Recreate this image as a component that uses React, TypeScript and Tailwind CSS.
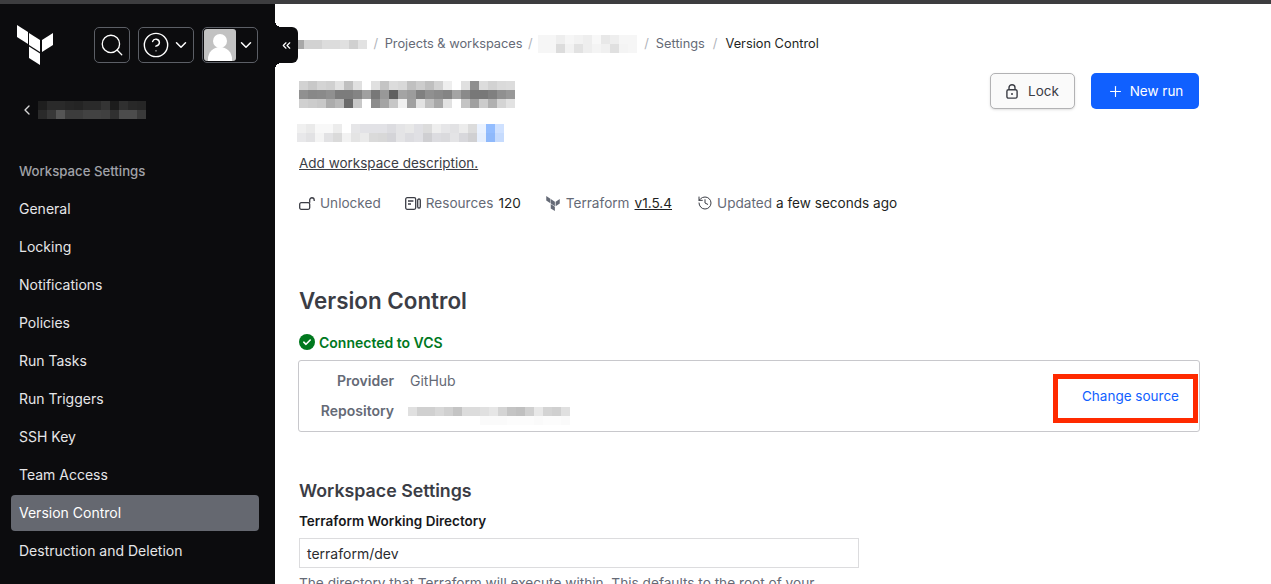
import React from "react";
import { ChevronDown, ChevronLeft, ChevronsLeft, Search, CircleHelp, Plus, History } from "lucide-react";

function Pixels({ rows, size = 9 }: { rows: string[][]; size?: number }) {
  return (
    <div className="flex flex-col">
      {rows.map((r, i) => (
        <div key={i} className="flex">
          {r.map((c, j) => (
            <div key={j} style={{ width: size, height: size, background: c }} />
          ))}
        </div>
      ))}
    </div>
  );
}

const g = (s: string) => s.split(" ").map((v) => (v.length <= 2 ? `#${v}${v}${v}` : `#${v}`));

const titleRows = [
  g("d2 c8 d4 d0 e2 c0 e0 ff e0 c4 dc d8 c0 cc bf d2 ee ff e0 8e dc d2 da dc"),
  g("90 88 8a 90 7c 7c 84 a0 78 98 60 a4 9c 80 90 8a 84 a4 8a 78 78 80 90 98"),
  g("d0 cc c8 ac b8 6a c8 ff 8c a4 c6 f0 a0 e2 c0 a8 e2 ff c4 a0 cc b0 d4 e2"),
];
const subRows = [
  ["#f0f0f0","#eaeaea","#f8f8f8","#f8f8f8","#ececec","#ffffff","#e6e6e8","#e2e2e6","#e2e2e6","#e2e2e6","#dcdce0","#e4e4e6","#e8e8e8","#e0e0e4","#dcdcdc","#eeeeee","#e6e6e8","#e2e2e4","#ececec","#dcdcdc","#eaf2ff","#93bdff","#cfe1ff"],
  ["#e8e8ea","#e2e2e4","#f4f4f4","#e2e2e4","#dadada","#f2f2f2","#e4e4e4","#eaeaea","#dadada","#d8d8d8","#d4d4d8","#e4e4e6","#dcdce0","#e0e0e4","#cfcfd2","#dcdce0","#dadadd","#e4e4e6","#d8d8dc","#d0d0d2","#e6effd","#8fb9fb","#c6dbfd"],
];
const sideRows = [
  g("1e 2a 2a 26 24 2a 2a 34 1c 30 28 26"),
  g("2a 38 55 3c 3c 42 42 40 30 4c 4c 3a"),
];
const crumb1 = [g("a8 d2 d2 dc dc e0 d0 e2")];
const crumb2 = [
  g("f6 f6 ee f6 f2 ee f8 e8 ee f6 f6"),
  g("f6 f6 dc f2 e2 ee f4 f0 e0 f4 f6"),
];
const repoRows = [
  g("e0 d0 d0 d8 d0 c4 dc dc e0 e6 d4 c4 c0 d0 e8 d4 d0 e0"),
  g("ff ff ff ff ff ff ff ff fa fa fa fc fc fc fa fc fc fa"),
];

const menu = ["General", "Locking", "Notifications", "Policies", "Run Tasks", "Run Triggers", "SSH Key", "Team Access", "Version Control", "Destruction and Deletion"];

function Logo({ className, fill }: { className: string; fill: string }) {
  return (
    <svg viewBox="0 0 36 40" className={className} fill={fill}>
      <path d="M0 0 L11 7 V19 L0 12 Z" />
      <path d="M12 8 L23 15 V27 L12 20 Z" />
      <path d="M25 15 L36 8 V20 L25 27 Z" />
      <path d="M12 21.5 L23 28.5 V40 L12 33 Z" />
    </svg>
  );
}

export default function App() {
  return (
    <div className="relative flex h-[584px] w-[1271px] flex-col overflow-hidden bg-white font-['Inter',sans-serif]">
      <div className="h-[4px] shrink-0 bg-[#3d3d3f]" />
      <div className="flex min-h-0 flex-1">
        <aside className="flex w-[275px] shrink-0 flex-col bg-[#0c0c0e] pl-[11px] pr-[16px] text-[14px] leading-[20px] text-[#e6e6e8]">
          <div className="mt-[21px] flex h-[40px] items-center">
            <Logo className="ml-[6px] h-[40px] w-[36px]" fill="#ffffff" />
            <div className="ml-[41px] flex h-[36px] w-[36px] items-center justify-center rounded-[5px] border border-[#5c5f66]">
              <Search className="h-[26px] w-[26px] text-white" strokeWidth={1.2} />
            </div>
            <div className="ml-[8px] flex h-[36px] w-[56px] items-center gap-[2px] rounded-[5px] border border-[#5c5f66] pl-[3px]">
              <CircleHelp className="h-[28px] w-[28px] text-white" strokeWidth={1.2} />
              <ChevronDown className="h-[18px] w-[18px] text-white" strokeWidth={2} />
            </div>
            <div className="ml-[8px] flex h-[36px] w-[56px] items-center rounded-[5px] border border-[#5c5f66] pl-[1px]">
              <div className="relative h-[32px] w-[32px] overflow-hidden rounded-[3px] bg-[#c2c2c2]">
                <div className="absolute left-[9px] top-[5px] h-[14px] w-[14px] rounded-full bg-white" />
                <div className="absolute left-[4px] top-[18px] h-[20px] w-[24px] rounded-t-[12px] bg-white" />
              </div>
              <ChevronDown className="ml-[1px] h-[18px] w-[18px] text-white" strokeWidth={2} />
            </div>
          </div>
          <div className="mt-[36px] flex h-[18px] items-center pl-[8px]">
            <ChevronLeft className="h-[16px] w-[16px] text-[#d8d8d8]" strokeWidth={2} />
            <div className="ml-[3px]"><Pixels rows={sideRows} /></div>
          </div>
          <div className="mt-[42px] pl-[8px] text-[13.2px] font-medium leading-[20px] text-[#a0a2a8]">Workspace Settings</div>
          <nav className="mt-[10px] flex flex-col gap-[2px]">
            {menu.map((m) => (
              <div key={m} className={`flex h-[36px] items-center rounded-[4px] pl-[8px] ${m === "Version Control" ? "bg-[#656870] text-white" : ""}`}>
                {m}
              </div>
            ))}
          </nav>
        </aside>

        <main className="min-w-0 flex-1 pl-[24px] pr-[72px]">
          <div className="ml-[-4px] mt-[30px] flex h-[20px] items-center text-[12.8px] text-[#656a76]">
            <Pixels rows={crumb1} />
            <span className="mx-[6.5px] text-[#b0b3ba]">/</span>
            <span>Projects &amp; workspaces</span>
            <span className="mx-[5.5px] text-[#b0b3ba]">/</span>
            <Pixels rows={crumb2} />
            <span className="mx-[7px] text-[#b0b3ba]">/</span>
            <span>Settings</span>
            <span className="mx-[8px] text-[#b0b3ba]">/</span>
            <span className="text-[#1e1f22]">Version Control</span>
          </div>

          <div className="mt-[19px] flex items-start justify-between">
            <div className="mt-[8px]"><Pixels rows={titleRows} /></div>
            <div className="flex gap-[16px]">
              <button className="flex h-[36px] w-[85px] items-center justify-center gap-[10px] rounded-[5px] border border-[#b2b2b4] bg-[#fafafa] text-[13.5px] text-[#3b3d45] shadow-sm">
                <svg viewBox="0 0 12 15" className="h-[15px] w-[12px]" fill="none" stroke="#3b3d45" strokeWidth="1.4">
                  <rect x="0.9" y="5.7" width="10.2" height="8.4" rx="1.6" />
                  <path d="M3 5.7V3.7a3 3 0 0 1 6 0v2" />
                  <circle cx="6" cy="9.9" r="1" fill="#3b3d45" stroke="none" />
                </svg>
                Lock
              </button>
              <button className="flex h-[36px] w-[108px] items-center justify-center gap-[6px] rounded-[5px] bg-[#1060ff] text-[13.5px] text-white">
                <Plus className="h-[17px] w-[17px]" strokeWidth={1.6} />
                New run
              </button>
            </div>
          </div>

          <div className="ml-[-2px] mt-[15px]"><Pixels rows={subRows} /></div>
          <div className="mt-[11px] text-[13.5px] leading-[20px] text-[#3b3d45] underline">Add workspace description.</div>

          <div className="mt-[20px] flex h-[20px] items-center text-[13.6px] text-[#656a76]">
            <svg viewBox="0 0 16 13" className="h-[13px] w-[16px]" fill="none" stroke="#3b3d45" strokeWidth="1.3">
              <rect x="0.7" y="5.7" width="10" height="6.6" rx="1.5" />
              <path d="M10.7 5.7V3a2.25 2.25 0 0 1 4.5 0v1" />
            </svg>
            <span className="ml-[5px]">Unlocked</span>
            <svg viewBox="0 0 16 13" className="ml-[24px] h-[13px] w-[16px]" fill="none" stroke="#3b3d45" strokeWidth="1.3">
              <rect x="0.7" y="0.7" width="10" height="11.6" rx="1.5" />
              <path d="M3 4h5.4M3 7h3" />
              <rect x="12.7" y="2" width="2.6" height="9" rx="1.2" />
            </svg>
            <span className="ml-[5px]">Resources</span>
            <span className="ml-[5px] text-[#1e1f22]">120</span>
            <Logo className="ml-[25px] h-[15px] w-[14px]" fill="#656a76" />
            <span className="ml-[6px]">Terraform</span>
            <span className="ml-[5px] text-[#1e1f22] underline">v1.5.4</span>
            <History className="ml-[25px] h-[16px] w-[16px] text-[#3b3d45]" strokeWidth={1.5} />
            <span className="ml-[4px]">Updated</span>
            <span className="ml-[4px] text-[#1e1f22]">a few seconds ago</span>
          </div>

          <h1 className="mt-[73px] text-[22.4px] font-semibold leading-[30px] text-[#3b3d45]">Version Control</h1>

          <div className="mt-[16px] flex h-[20px] items-center gap-[4px] text-[14px] font-semibold text-[#00781e]">
            <svg viewBox="0 0 16 16" className="h-[16px] w-[16px]">
              <circle cx="8" cy="8" r="8" fill="#00781e" />
              <path d="M4.8 8.2 7 10.3 11.2 6" fill="none" stroke="#fff" strokeWidth="1.6" strokeLinecap="round" strokeLinejoin="round" />
            </svg>
            Connected to VCS
          </div>

          <div className="relative ml-[-1px] mt-[8px] flex h-[72px] w-[902px] items-center justify-between rounded-[3px] border border-[#c8c8cc] text-[14px] leading-[20px]">
            <div className="grid grid-cols-[95px_auto] items-center gap-x-[16px] gap-y-[10px]">
              <span className="text-right font-semibold text-[#656a76]">Provider</span>
              <span className="text-[#656a76]">GitHub</span>
              <span className="text-right font-semibold text-[#656a76]">Repository</span>
              <div className="mb-[-5px] ml-[-2px] mt-[5px]"><Pixels rows={repoRows} /></div>
            </div>
            <span className="mr-[20px] text-[13.5px] text-[#1060ff]">Change source</span>
            <div className="absolute left-[754px] top-[13px] h-[49px] w-[145px] border-[5px] border-[#ff2a00]" />
          </div>

          <h2 className="mt-[47px] text-[17.8px] font-semibold leading-[24px] text-[#3b3d45]">Workspace Settings</h2>
          <div className="mt-[8px] text-[13.5px] font-semibold leading-[20px] text-[#17181b]">Terraform Working Directory</div>
          <div className="mt-[7px] flex h-[30px] w-[560px] items-center border border-[#dcdcde] px-[7px] text-[14px] text-[#2b2c30]">terraform/dev</div>
          <div className="mt-[5px] text-[13.65px] leading-[20px] text-[#656a76]">The directory that Terraform will execute within. This defaults to the root of your</div>
        </main>
      </div>

      <div className="absolute left-[275px] top-[27px] flex h-[36px] w-[23px] items-center justify-start rounded-r-[6px] bg-[#0c0c0e] pl-[5px]">
        <ChevronsLeft className="h-[13px] w-[13px] text-white" strokeWidth={2.2} />
      </div>
      <div className="absolute left-[275px] top-[21px] h-[6px] w-[6px] bg-[radial-gradient(circle_at_100%_0%,transparent_6px,#0c0c0e_6px)]" />
      <div className="absolute left-[275px] top-[63px] h-[6px] w-[6px] bg-[radial-gradient(circle_at_100%_100%,transparent_6px,#0c0c0e_6px)]" />
    </div>
  );
}
